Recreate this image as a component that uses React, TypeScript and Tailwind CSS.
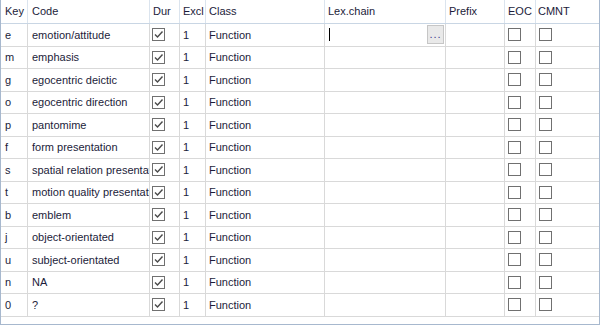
import React from 'react';

const rows: [string, string][] = [
  ['e', 'emotion/attitude'],
  ['m', 'emphasis'],
  ['g', 'egocentric deictic'],
  ['o', 'egocentric direction'],
  ['p', 'pantomime'],
  ['f', 'form presentation'],
  ['s', 'spatial relation presentation'],
  ['t', 'motion quality presentation'],
  ['b', 'emblem'],
  ['j', 'object-orientated'],
  ['u', 'subject-orientated'],
  ['n', 'NA'],
  ['0', '?'],
];

const CheckBox: React.FC<{ checked?: boolean }> = ({ checked }) => (
  <div className="w-[13px] h-[13px] border border-[#707070] bg-white flex items-center justify-center">
    {checked && (
      <svg width="11" height="11" viewBox="0 0 11 11">
        <path d="M2 5.5 L4.5 8 L9.5 2.5" fill="none" stroke="#4a4a4a" strokeWidth="1.4" />
      </svg>
    )}
  </div>
);

const App: React.FC = () => {
  return (
    <div className="w-[600px] h-[325px] bg-white border-l border-r border-b border-[#a7b8ce] overflow-hidden flex flex-col font-['Liberation_Sans',Arial,sans-serif] text-[11px] text-[#1c1c3a]">
      {/* Header */}
      <div className="flex h-[24px] shrink-0 border-b border-[#c9d6e4] items-stretch">
        <div className="w-[27px] shrink-0 border-r border-[#dbe4ee] pl-1 flex items-center">Key</div>
        <div className="w-[122px] shrink-0 border-r border-[#dbe4ee] pl-1 flex items-center">Code</div>
        <div className="w-[30px] shrink-0 border-r border-[#dbe4ee] pl-[3px] flex items-center">Dur</div>
        <div className="w-[26px] shrink-0 border-r border-[#dbe4ee] pl-[3px] flex items-center">Excl</div>
        <div className="w-[119px] shrink-0 border-r border-[#dbe4ee] pl-[3px] flex items-center">Class</div>
        <div className="w-[121px] shrink-0 border-r border-[#dbe4ee] pl-[3px] flex items-center">Lex.chain</div>
        <div className="w-[59px] shrink-0 border-r border-[#dbe4ee] pl-[3px] flex items-center">Prefix</div>
        <div className="w-[31px] shrink-0 border-r border-[#dbe4ee] pl-[3px] flex items-center">EOC</div>
        <div className="flex-1 pl-[2px] flex items-center">CMNT</div>
      </div>

      {/* Body */}
      {rows.map(([key, code], i) => (
        <div key={key} className="flex h-[22.5px] shrink-0 border-b border-[#d9d9d9] items-stretch">
          <div className="w-[27px] shrink-0 border-r border-[#d9d9d9] pl-1 flex items-center">{key}</div>
          <div className="w-[122px] shrink-0 border-r border-[#d9d9d9] pl-1 flex items-center overflow-hidden whitespace-nowrap">{code}</div>
          <div className="w-[30px] shrink-0 border-r border-[#d9d9d9] pl-[2px] flex items-center">
            <CheckBox checked />
          </div>
          <div className="w-[26px] shrink-0 border-r border-[#d9d9d9] pl-[3px] flex items-center">1</div>
          <div className="w-[119px] shrink-0 border-r border-[#d9d9d9] pl-[3px] flex items-center">Function</div>
          <div className="w-[121px] shrink-0 border-r border-[#d9d9d9] pl-[4px] pr-px flex items-center justify-between">
            {i === 0 && (
              <>
                <div className="w-px h-[13px] bg-black" />
                <div className="w-[17px] h-[19px] border border-[#c6c6c6] bg-[#e9e9e9] flex items-end justify-center pb-[3px] leading-none text-[#3a3a8a] tracking-[1px]">
                  ...
                </div>
              </>
            )}
          </div>
          <div className="w-[59px] shrink-0 border-r border-[#d9d9d9]" />
          <div className="w-[31px] shrink-0 border-r border-[#d9d9d9] pl-[3px] flex items-center">
            <CheckBox />
          </div>
          <div className="flex-1 pl-[3px] flex items-center">
            <CheckBox />
          </div>
        </div>
      ))}
    </div>
  );
};

export default App;
